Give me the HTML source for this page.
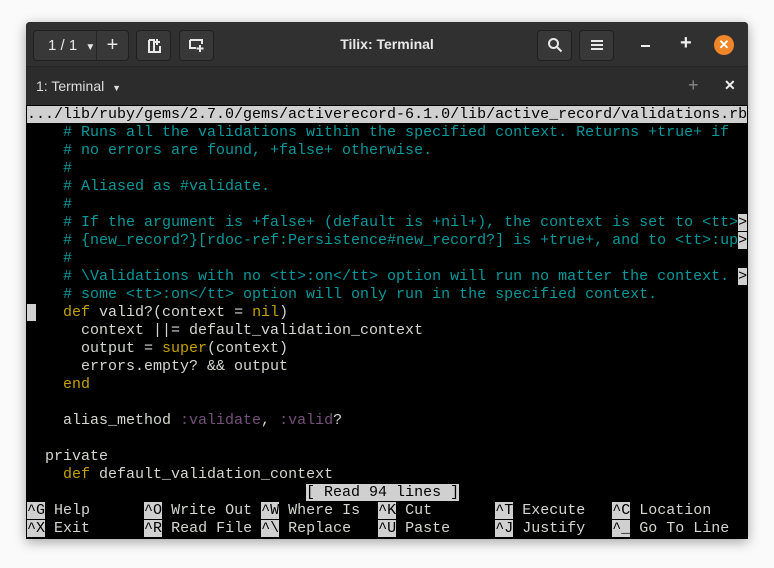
<!DOCTYPE html>
<html><head><meta charset="utf-8"><style>
*{margin:0;padding:0;box-sizing:border-box}
body{width:774px;height:568px;background:#fafafa;position:relative;overflow:hidden;font-family:"Liberation Sans",sans-serif}
.win{position:absolute;left:26px;top:22px;width:722px;height:517px;background:#000;box-shadow:0 3px 12px rgba(0,0,0,.35);border-radius:4px 4px 0 0;overflow:hidden}
.hdr{position:absolute;left:0;top:0;width:722px;height:45px;background:#303030;border-bottom:1px solid #242424}
.tab{position:absolute;left:0;top:45px;width:722px;height:38px;background:#2c2c2c}
.btn{position:absolute;top:8px;height:31px;border:1px solid #1f1f1f;border-radius:4px;background:#383838;color:#e8e8e8;font-size:15px;line-height:29px;text-align:center}
.title{position:absolute;left:0;width:722px;top:14px;text-align:center;color:#e8e8e8;font-weight:bold;font-size:14px}
pre{position:absolute;left:1px;top:84px;font-family:"Liberation Mono",monospace;font-size:15px;line-height:18px;color:#d3d7cf;letter-spacing:0}
.c{color:#06989a}.k{color:#c4a000}.p{color:#75507b}.i{background:#d0d0d0;color:#000}
</style></head><body>
<div class="win">
<div class="hdr">
 <div class="btn" style="left:7px;width:92px;text-align:left;padding-left:14px">1 / 1 <span style="font-size:10px;margin-left:4px">▼</span></div>
 <div class="btn" style="left:70px;width:33px;border-left:1px solid #252525;border-radius:0 4px 4px 0;font-size:20px">+</div>
 <div class="btn" style="left:110px;width:35px"><svg width="14" height="16" viewBox="0 0 14 16" style="margin-top:7px"><path d="M2 2h5v12h6v-6M2 2v12h5" fill="none" stroke="#e8e8e8" stroke-width="2"/><path d="M10 1v6M7 4h6" stroke="#e8e8e8" stroke-width="2"/></svg></div>
 <div class="btn" style="left:153px;width:35px"><svg width="16" height="14" viewBox="0 0 16 14" style="margin-top:8px"><path d="M1 1h12v4M1 1v8h6" fill="none" stroke="#e8e8e8" stroke-width="2"/><path d="M11 6v7M7.5 9.5h7" stroke="#e8e8e8" stroke-width="2"/></svg></div>
 <div class="title">Tilix: Terminal</div>
 <div class="btn" style="left:511px;width:35px"><svg width="16" height="16" viewBox="0 0 16 16" style="margin-top:6px"><circle cx="6.5" cy="6.5" r="4.5" fill="none" stroke="#e8e8e8" stroke-width="2"/><path d="M10 10l4.5 4.5" stroke="#e8e8e8" stroke-width="2"/></svg></div>
 <div class="btn" style="left:553px;width:35px"><svg width="12" height="12" viewBox="0 0 12 12" style="margin-top:8px"><path d="M0 2h12M0 6h12M0 10h12" stroke="#e8e8e8" stroke-width="2"/></svg></div>
 <div style="position:absolute;left:615px;top:23px;width:9px;height:2px;background:#eee"></div>
 <div style="position:absolute;left:654px;top:10px;color:#eee;font-size:20px;font-weight:bold">+</div>
 <div style="position:absolute;left:688px;top:13px;width:20px;height:20px;border-radius:50%;background:#f0862a;color:#fff;text-align:center;line-height:20px;font-size:13px;font-weight:bold">✕</div>
</div>
<div class="tab">
 <div style="position:absolute;left:10px;top:11px;color:#ddd;font-size:14px">1: Terminal <span style="font-size:9px;margin-left:4px">▼</span></div>
 <div style="position:absolute;left:662px;top:8px;color:#888;font-size:18px">+</div>
 <div style="position:absolute;left:698px;top:10px;color:#eee;font-size:14px;font-weight:bold">✕</div>
</div>
<pre><span class="i">.../lib/ruby/gems/2.7.0/gems/activerecord-6.1.0/lib/active_record/validations.rb</span>
<span class="c">    # Runs all the validations within the specified context. Returns +true+ if</span>
<span class="c">    # no errors are found, +false+ otherwise.</span>
<span class="c">    #</span>
<span class="c">    # Aliased as #validate.</span>
<span class="c">    #</span>
<span class="c">    # If the argument is +false+ (default is +nil+), the context is set to &lt;tt&gt;</span><span class="i">&gt;</span>
<span class="c">    # {new_record?}[rdoc-ref:Persistence#new_record?] is +true+, and to &lt;tt&gt;:up</span><span class="i">&gt;</span>
<span class="c">    #</span>
<span class="c">    # \Validations with no &lt;tt&gt;:on&lt;/tt&gt; option will run no matter the context. </span><span class="i">&gt;</span>
<span class="c">    # some &lt;tt&gt;:on&lt;/tt&gt; option will only run in the specified context.</span>
<span class="i"> </span>   <span class="k">def</span> valid?(context = <span class="k">nil</span>)
      context ||= default_validation_context
      output = <span class="k">super</span>(context)
      errors.empty? &amp;&amp; output
    <span class="k">end</span>

    alias_method <span class="p">:validate</span>, <span class="p">:valid</span>?

  private
    <span class="k">def</span> default_validation_context
                               <span class="i">[ Read 94 lines ]</span>
<span class="i">^G</span> Help      <span class="i">^O</span> Write Out <span class="i">^W</span> Where Is  <span class="i">^K</span> Cut       <span class="i">^T</span> Execute   <span class="i">^C</span> Location
<span class="i">^X</span> Exit      <span class="i">^R</span> Read File <span class="i">^\</span> Replace   <span class="i">^U</span> Paste     <span class="i">^J</span> Justify   <span class="i">^_</span> Go To Line</pre>
</div>
</body></html>
